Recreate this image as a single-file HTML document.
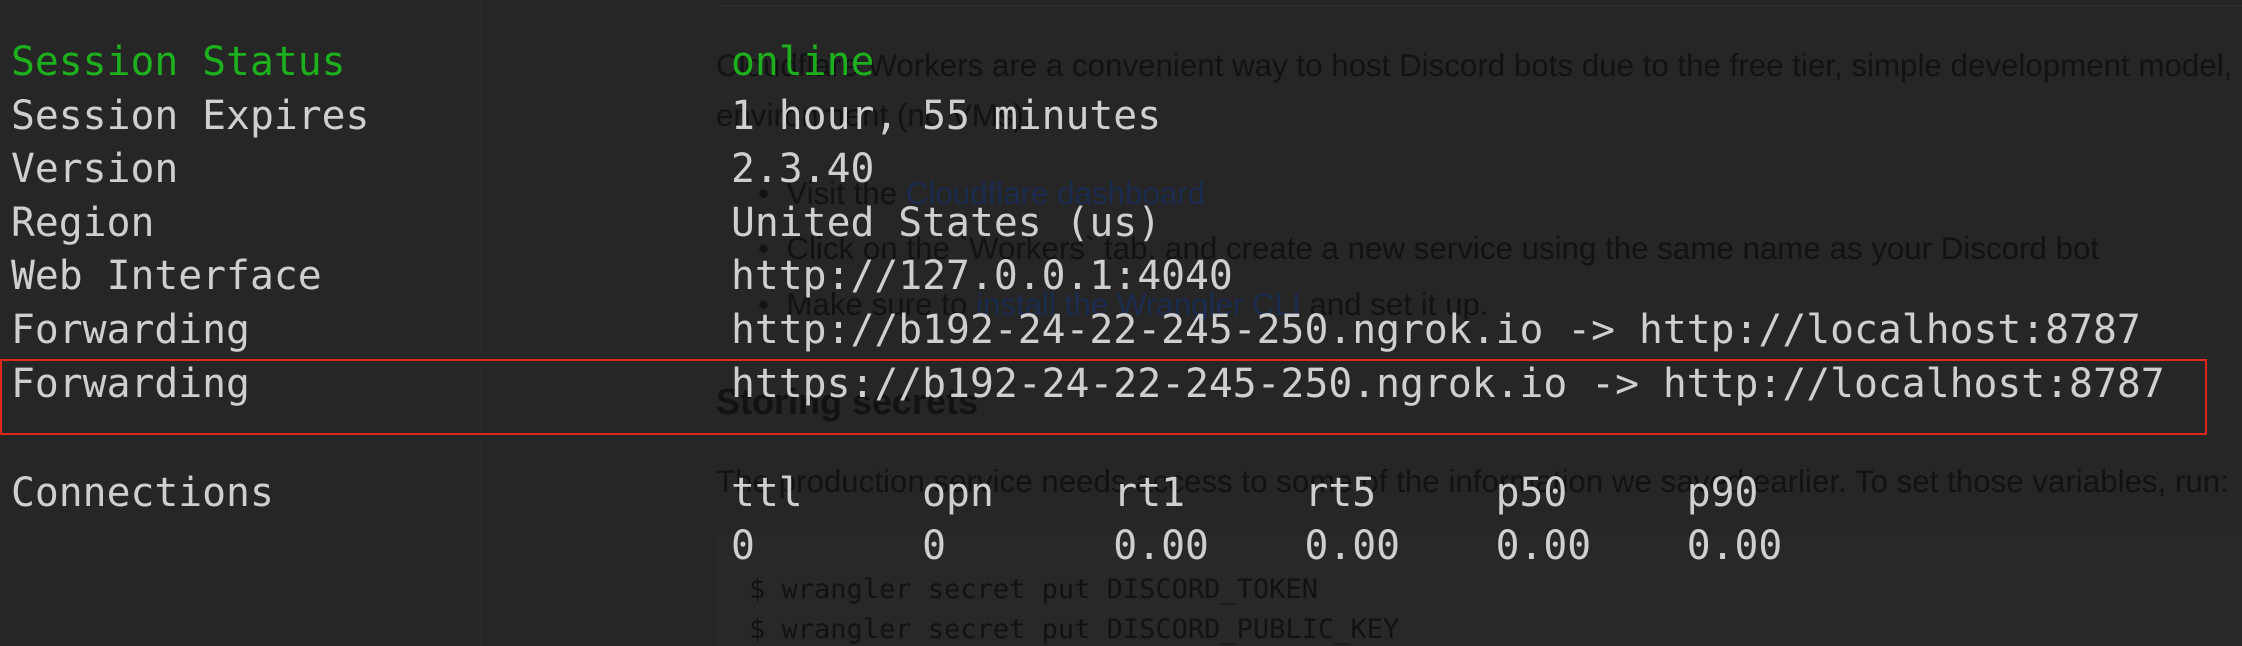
<!DOCTYPE html>
<html><head><meta charset="utf-8"><style>
html,body{margin:0;padding:0}
body{width:2242px;height:646px;background:#262626;position:relative;overflow:hidden;font-family:"DejaVu Sans Mono","Liberation Mono",monospace}
#wrap{position:absolute;left:0;top:0;width:2242px;height:646px;overflow:hidden}
.bg{position:absolute;font-family:"Liberation Sans",Arial,sans-serif;color:#121212;font-size:31.3px;white-space:nowrap;line-height:36px}
.bg a{color:#1c2b50}
.t{position:absolute;white-space:pre;font-size:39.7px;line-height:54px;color:#cfcfcf}
.g{color:#1db01d}
</style></head><body><div id="wrap">
<div style="position:absolute;left:480px;top:0;width:1px;height:646px;background:#2a2a2a"></div>
<div style="position:absolute;left:716px;top:5px;width:1526px;height:2px;background:#2c2c2c"></div>
<div style="position:absolute;left:716px;top:535px;width:1526px;height:111px;background:#282828"></div>

<div class="bg" style="left:716px;top:48px">Cloudflare Workers are a convenient way to host Discord bots due to the free tier, simple development model, and</div>
<div class="bg" style="left:716px;top:98px">environment (no VMs).</div>
<div class="bg" style="left:758px;top:176px">•&nbsp;&nbsp;Visit the <a>Cloudflare dashboard</a></div>
<div class="bg" style="left:758px;top:231px">•&nbsp;&nbsp;Click on the `Workers` tab, and create a new service using the same name as your Discord bot</div>
<div class="bg" style="left:758px;top:287px">•&nbsp;&nbsp;Make sure to <a>install the Wrangler CLI</a> and set it up.</div>
<div class="bg" style="left:716px;top:380px;font-size:36px;font-weight:bold;line-height:44px">Storing secrets</div>
<div class="bg" style="left:716px;top:464px">The production service needs access to some of the information we saved earlier. To set those variables, run:</div>
<div class="bg" style="left:749px;top:575px;font-family:'DejaVu Sans Mono',monospace;font-size:27px;line-height:30px">$ wrangler secret put DISCORD_TOKEN</div>
<div class="bg" style="left:749px;top:615px;font-family:'DejaVu Sans Mono',monospace;font-size:27px;line-height:30px">$ wrangler secret put DISCORD_PUBLIC_KEY</div>

<div class="t g" style="left:11px;top:35px">Session Status</div>
<div class="t" style="left:11px;top:89px">Session Expires</div>
<div class="t" style="left:11px;top:142px">Version</div>
<div class="t" style="left:11px;top:196px">Region</div>
<div class="t" style="left:11px;top:249px">Web Interface</div>
<div class="t" style="left:11px;top:303px">Forwarding</div>
<div class="t" style="left:11px;top:357px">Forwarding</div>
<div class="t" style="left:11px;top:466px">Connections</div>

<div class="t g" style="left:731px;top:35px">online</div>
<div class="t" style="left:731px;top:89px">1 hour, 55 minutes</div>
<div class="t" style="left:731px;top:142px">2.3.40</div>
<div class="t" style="left:731px;top:196px">United States (us)</div>
<div class="t" style="left:731px;top:249px">http://127.0.0.1:4040</div>
<div class="t" style="left:731px;top:303px">http://b192-24-22-245-250.ngrok.io -> http://localhost:8787</div>
<div class="t" style="left:731px;top:357px">https://b192-24-22-245-250.ngrok.io -> http://localhost:8787</div>
<div class="t" style="left:731px;top:466px">ttl     opn     rt1     rt5     p50     p90</div>
<div class="t" style="left:731px;top:519px">0       0       0.00    0.00    0.00    0.00</div>

<div style="position:absolute;left:0;top:359px;width:2203px;height:72px;border:2px solid #e0281e"></div>
</div></body></html>
